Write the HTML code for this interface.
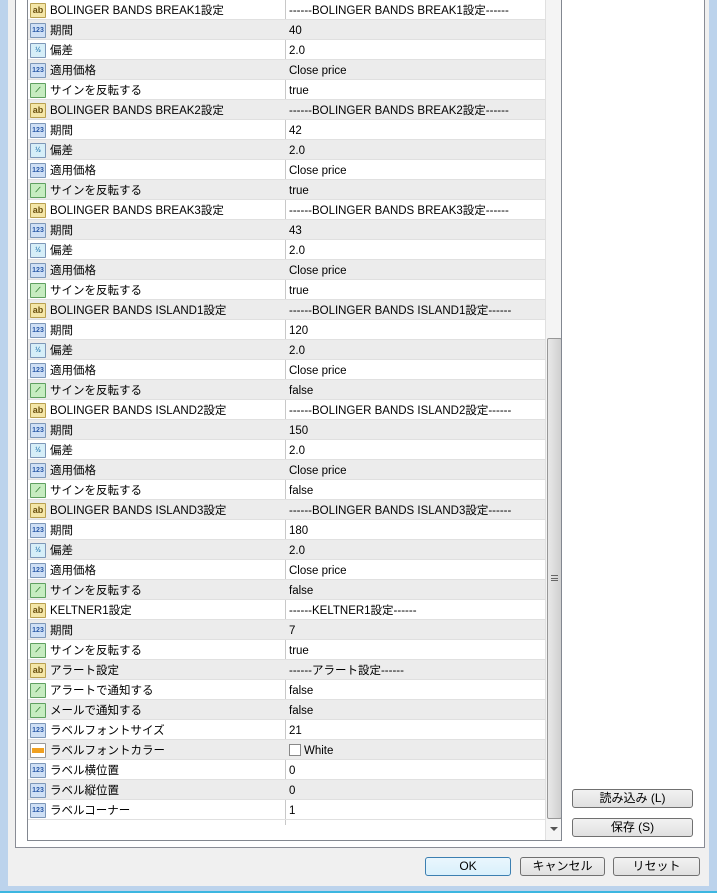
<!DOCTYPE html>
<html><head><meta charset="utf-8"><style>
*{margin:0;padding:0;box-sizing:border-box}
body{width:717px;height:893px;background:#f0f0f0;position:relative;overflow:hidden;font-family:"Liberation Sans","Noto Sans CJK JP",sans-serif;font-size:11.5px;color:#000}
.fl{position:absolute;left:0;top:0;width:8px;height:893px;background:#bcd3ec}
.fr{position:absolute;right:0;top:0;width:8px;height:893px;background:#bcd3ec}
.fb{position:absolute;left:0;bottom:0;width:717px;height:7px;background:#bcd3ec;border-bottom:2px solid #3cb6e0}
.panel{position:absolute;left:15px;top:-2px;width:690px;height:850px;background:#fff;border:1px solid #898c95}
.list{position:absolute;left:27px;top:-2px;width:535px;height:843px;border:1px solid #828790;background:#fff;overflow:hidden}
.row{position:absolute;left:0;width:518px;height:20px;border-bottom:1px solid #e0e0e0;line-height:19px}
.row.g{background:#ececec}
.n{position:absolute;left:22px;top:2px}
.v{position:absolute;left:261px;top:2px}
.div{position:absolute;left:257px;top:0;width:1px;height:826px;background:#c8c8c8}
.ic{position:absolute;left:2px;top:3px;width:16px;height:15px;border:1px solid #7d97b8;border-radius:1px;font-size:7px;font-weight:bold;line-height:13px;text-align:center}
.i123{background:#cfe0f5;color:#2a5aa8}
.ihalf{background:#d6eef8;color:#2a7ab0}
.iab{background:#f4e6a8;border-color:#b8a050;color:#6a5010;font-size:9px}
.ibool{background:#c6ecc0;border-color:#5fa060;color:#207020}
.icol{background:#fff;border-color:#999}
.sb{position:absolute;left:517px;top:0;width:17px;height:841px;background:#f4f4f4;border-left:1px solid #e0e0e0}
.thumb{position:absolute;left:1px;top:339px;width:15px;height:481px;border:1px solid #979797;border-radius:2px;background:linear-gradient(90deg,#e8e8e8,#dcdcdc 50%,#cfcfcf)}
.btn{position:absolute;height:19px;border:1px solid #707070;border-radius:3px;background:linear-gradient(#f2f2f2,#e0e0e0);text-align:center;line-height:17px;font-size:12px}
</style></head><body>
<div class="fl"></div><div class="fr"></div><div class="fb"></div>
<div class="panel"></div>
<div class="list">
<div class="div"></div>
<div class="row" style="top:1px"><span class="ic iab">ab</span><span class="n">BOLINGER BANDS BREAK1設定</span><span class="v">------BOLINGER BANDS BREAK1設定------</span></div>
<div class="row g" style="top:21px"><span class="ic i123">123</span><span class="n">期間</span><span class="v">40</span></div>
<div class="row" style="top:41px"><span class="ic ihalf">½</span><span class="n">偏差</span><span class="v">2.0</span></div>
<div class="row g" style="top:61px"><span class="ic i123">123</span><span class="n">適用価格</span><span class="v">Close price</span></div>
<div class="row" style="top:81px"><span class="ic ibool">⟋</span><span class="n">サインを反転する</span><span class="v">true</span></div>
<div class="row g" style="top:101px"><span class="ic iab">ab</span><span class="n">BOLINGER BANDS BREAK2設定</span><span class="v">------BOLINGER BANDS BREAK2設定------</span></div>
<div class="row" style="top:121px"><span class="ic i123">123</span><span class="n">期間</span><span class="v">42</span></div>
<div class="row g" style="top:141px"><span class="ic ihalf">½</span><span class="n">偏差</span><span class="v">2.0</span></div>
<div class="row" style="top:161px"><span class="ic i123">123</span><span class="n">適用価格</span><span class="v">Close price</span></div>
<div class="row g" style="top:181px"><span class="ic ibool">⟋</span><span class="n">サインを反転する</span><span class="v">true</span></div>
<div class="row" style="top:201px"><span class="ic iab">ab</span><span class="n">BOLINGER BANDS BREAK3設定</span><span class="v">------BOLINGER BANDS BREAK3設定------</span></div>
<div class="row g" style="top:221px"><span class="ic i123">123</span><span class="n">期間</span><span class="v">43</span></div>
<div class="row" style="top:241px"><span class="ic ihalf">½</span><span class="n">偏差</span><span class="v">2.0</span></div>
<div class="row g" style="top:261px"><span class="ic i123">123</span><span class="n">適用価格</span><span class="v">Close price</span></div>
<div class="row" style="top:281px"><span class="ic ibool">⟋</span><span class="n">サインを反転する</span><span class="v">true</span></div>
<div class="row g" style="top:301px"><span class="ic iab">ab</span><span class="n">BOLINGER BANDS ISLAND1設定</span><span class="v">------BOLINGER BANDS ISLAND1設定------</span></div>
<div class="row" style="top:321px"><span class="ic i123">123</span><span class="n">期間</span><span class="v">120</span></div>
<div class="row g" style="top:341px"><span class="ic ihalf">½</span><span class="n">偏差</span><span class="v">2.0</span></div>
<div class="row" style="top:361px"><span class="ic i123">123</span><span class="n">適用価格</span><span class="v">Close price</span></div>
<div class="row g" style="top:381px"><span class="ic ibool">⟋</span><span class="n">サインを反転する</span><span class="v">false</span></div>
<div class="row" style="top:401px"><span class="ic iab">ab</span><span class="n">BOLINGER BANDS ISLAND2設定</span><span class="v">------BOLINGER BANDS ISLAND2設定------</span></div>
<div class="row g" style="top:421px"><span class="ic i123">123</span><span class="n">期間</span><span class="v">150</span></div>
<div class="row" style="top:441px"><span class="ic ihalf">½</span><span class="n">偏差</span><span class="v">2.0</span></div>
<div class="row g" style="top:461px"><span class="ic i123">123</span><span class="n">適用価格</span><span class="v">Close price</span></div>
<div class="row" style="top:481px"><span class="ic ibool">⟋</span><span class="n">サインを反転する</span><span class="v">false</span></div>
<div class="row g" style="top:501px"><span class="ic iab">ab</span><span class="n">BOLINGER BANDS ISLAND3設定</span><span class="v">------BOLINGER BANDS ISLAND3設定------</span></div>
<div class="row" style="top:521px"><span class="ic i123">123</span><span class="n">期間</span><span class="v">180</span></div>
<div class="row g" style="top:541px"><span class="ic ihalf">½</span><span class="n">偏差</span><span class="v">2.0</span></div>
<div class="row" style="top:561px"><span class="ic i123">123</span><span class="n">適用価格</span><span class="v">Close price</span></div>
<div class="row g" style="top:581px"><span class="ic ibool">⟋</span><span class="n">サインを反転する</span><span class="v">false</span></div>
<div class="row" style="top:601px"><span class="ic iab">ab</span><span class="n">KELTNER1設定</span><span class="v">------KELTNER1設定------</span></div>
<div class="row g" style="top:621px"><span class="ic i123">123</span><span class="n">期間</span><span class="v">7</span></div>
<div class="row" style="top:641px"><span class="ic ibool">⟋</span><span class="n">サインを反転する</span><span class="v">true</span></div>
<div class="row g" style="top:661px"><span class="ic iab">ab</span><span class="n">アラート設定</span><span class="v">------アラート設定------</span></div>
<div class="row" style="top:681px"><span class="ic ibool">⟋</span><span class="n">アラートで通知する</span><span class="v">false</span></div>
<div class="row g" style="top:701px"><span class="ic ibool">⟋</span><span class="n">メールで通知する</span><span class="v">false</span></div>
<div class="row" style="top:721px"><span class="ic i123">123</span><span class="n">ラベルフォントサイズ</span><span class="v">21</span></div>
<div class="row g" style="top:741px"><span class="ic icol"><span style="display:block;margin:4px 1px;height:5px;background:#f0a020"></span></span><span class="n">ラベルフォントカラー</span><span class="v"><span style="display:inline-block;width:12px;height:12px;border:1px solid #888;background:#fff;vertical-align:-2px;margin-right:3px"></span>White</span></div>
<div class="row" style="top:761px"><span class="ic i123">123</span><span class="n">ラベル横位置</span><span class="v">0</span></div>
<div class="row g" style="top:781px"><span class="ic i123">123</span><span class="n">ラベル縦位置</span><span class="v">0</span></div>
<div class="row" style="top:801px"><span class="ic i123">123</span><span class="n">ラベルコーナー</span><span class="v">1</span></div>
<div class="sb"><div class="thumb"><div style="position:absolute;left:3px;top:236px;width:7px;height:6px;border-top:1px solid #666;border-bottom:1px solid #666"><div style="margin-top:2px;height:1px;background:#666"></div></div></div>
<div style="position:absolute;left:4px;top:828px;border:4px solid transparent;border-top:4px solid #555;border-bottom:0"></div></div>
</div>
<div class="btn" style="left:572px;top:789px;width:121px">読み込み (L)</div>
<div class="btn" style="left:572px;top:818px;width:121px">保存 (S)</div>
<div class="btn" style="left:425px;top:857px;width:86px;border-color:#3c7fb1;background:linear-gradient(#eaf6fd,#d9f0fc)">OK</div>
<div class="btn" style="left:520px;top:857px;width:85px">キャンセル</div>
<div class="btn" style="left:613px;top:857px;width:87px">リセット</div>
</body></html>
